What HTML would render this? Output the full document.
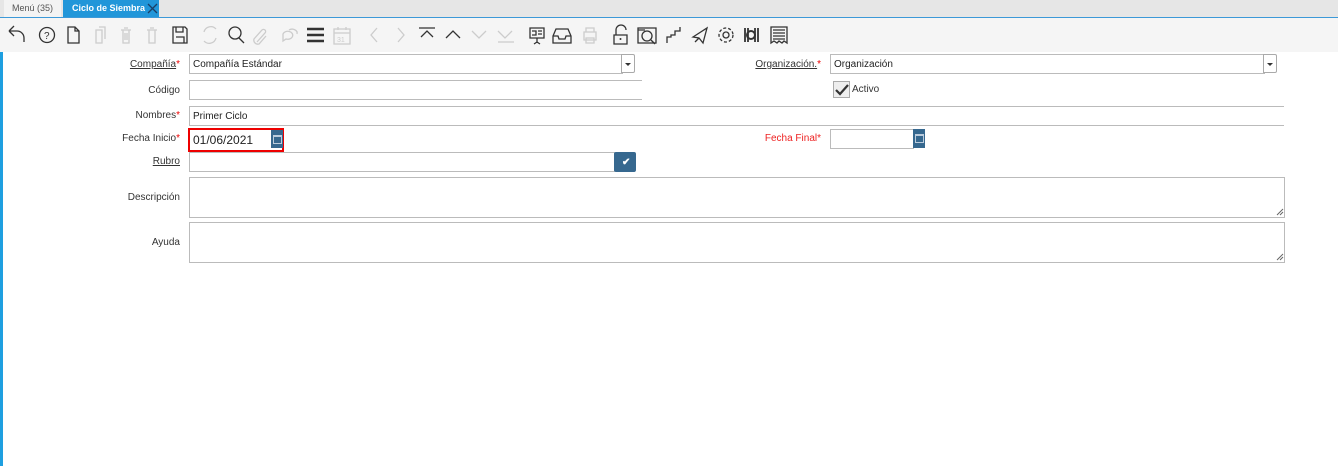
<!DOCTYPE html>
<html><head><meta charset="utf-8"><style>
body{margin:0;width:1338px;height:466px;background:#fff;font-family:"Liberation Sans",sans-serif;font-size:10px;color:#333;position:relative;overflow:hidden}
.a{position:absolute}
.tabs{left:0;top:0;width:1338px;height:17px;background:#e6e6e6;border-bottom:1px solid #3c99d8}
.tb{left:0;top:18px;width:1338px;height:34px;background:#f5f5f5}
.lb{text-align:right;width:120px;font-size:10px;color:#333}
.in{border:1px solid #bbb;background:#fff;box-sizing:border-box;font-size:10px;padding:4px 3px 0;color:#222}
.st{color:#e00}
u{text-decoration:underline}
.btn{background:#36688f;border-radius:2px}
.dd{border:1px solid #aaa;background:#fff;box-sizing:border-box;border-radius:0 2px 2px 0}
.dd:after{content:"";position:absolute;left:3px;top:8px;border:3px solid transparent;border-top:3px solid #333}
svg{position:absolute}
</style></head><body>
<div class="a tabs"></div>
<div class="a" style="left:4px;top:0;width:57px;height:17px;background:#f3f3f3;font-size:9px;color:#555;line-height:17px;text-align:center">Menú (35)</div>
<div class="a" style="left:63px;top:0;width:96px;height:17px;background:#2196d9;color:#fff;font-size:9px;font-weight:bold;line-height:17px;padding-left:9px;box-sizing:border-box">Ciclo de Siembra</div>
<svg style="left:147px;top:3px" width="11" height="11"><path d="M1 1L10 10M10 1L1 10" stroke="#1a3f66" stroke-width="1.3"/></svg>
<div class="a tb"></div>
<svg style="left:0;top:18px" width="800" height="34" fill="none" stroke-width="1.3">
<g stroke="#333"><path d="M9 13l5-5M9 13l5 5M9 13h8a7 7 0 0 1 7 7v4"/></g>
<circle cx="47" cy="17" r="7.5" stroke="#333"/><text x="44" y="21" font-size="10" fill="#333" stroke="none">?</text>
<path d="M68 9h7l4 4v12h-11z M75 9v4h4" stroke="#333"/>
<path d="M96 12h6v13h-6z M99 9h6v12" stroke="#ccc"/>
<path d="M121 12h10M123 12v13h6v-13M124 10h4M125 15v7M127 15v7" stroke="#ccc"/>
<path d="M147 12h10M149 12v13h6v-13M150 10h4" stroke="#ccc"/>
<path d="M173 9h12l2 2v14h-14z M176 9v5h7v-5 M176 19h8v6" stroke="#333"/>
<path d="M204 14a7 7 0 0 1 12-3M216 20a7 7 0 0 1-12 3" stroke="#ccc"/>
<circle cx="235" cy="15" r="6" stroke="#333"/><path d="M239 20l5 5" stroke="#333"/>
<path d="M257 24l8-9a2 2 0 0 0-3-3l-8 9a4 4 0 0 0 5 5l7-8" stroke="#ccc"/>
<path d="M283 16a5 4 0 1 1 3 5l-3 2z M289 12a5 4 0 0 1 8 4" stroke="#ccc"/>
<path d="M307 11h17M307 17h17M307 23h17" stroke="#333" stroke-width="2.5"/>
<path d="M334 11h16v15h-16zM334 15h16M338 9v3M346 9v3" stroke="#ccc"/><text x="337" y="24" font-size="7" fill="#ccc" stroke="none">31</text>
<path d="M377 10l-6 7 6 7M398 10l6 7-6 7" stroke="#ccc"/>
<path d="M419 10h16M421 19l6-6 6 6M446 20l7-7 7 7" stroke="#333"/>
<path d="M472 13l7 7 7-7M498 13l7 7 7-7M498 24h16" stroke="#ccc"/>
<path d="M530 10h14v10h-14zM537 20v5M534 26l3-2 3 2M532 13h4v4h-4M538 13h4M538 16h4" stroke="#333"/>
<path d="M556 11h12l3 7v7h-18v-7zM553 18h5l1 3h6l1-3h5" stroke="#333"/>
<path d="M584 14h12v8h-12zM586 14v-4h8v4M586 20h8v5h-8z" stroke="#ccc"/>
<path d="M616 17v-5a5 5 0 0 1 10 0M614 17h13v9h-13z" stroke="#333"/><circle cx="620.5" cy="21" r="1" fill="#333"/>
<path d="M638 10h18v15h-18zM638 12h7" stroke="#333"/><circle cx="647" cy="18" r="5" stroke="#333"/><path d="M651 22l4 4" stroke="#333"/>
<path d="M667 25v-6h4v-2h4v-4h5v-4" stroke="#333"/>
<path d="M693 19l14-9-4 15-4-5zM699 20l-4 4" stroke="#333"/>
<circle cx="726" cy="17" r="3" stroke="#333"/><circle cx="726" cy="17" r="7" stroke="#333" stroke-dasharray="3 2"/>
<path d="M745 10v14M748 10v14M755 10v14M758 10v14" stroke="#333" stroke-width="1.8"/><circle cx="751" cy="17" r="4" stroke="#333" stroke-width="2"/>
<path d="M771 9h16v16l-3-2-2 2-3-2-2 2-3-2-3 2zM773 12h12M773 15h12M773 18h12M773 21h12" stroke="#333"/>
</svg>
<div class="a" style="left:0;top:52px;width:3px;height:414px;background:#1e9fe0"></div>

<div class="a lb" style="left:60px;top:59px"><u>Compañía</u><span class="st">*</span></div>
<div class="a in" style="left:189px;top:54px;width:434px;height:20px">Compañía Estándar</div>
<div class="a dd" style="left:621px;top:54px;width:14px;height:19px"></div>

<div class="a lb" style="left:60px;top:85px">Código</div>
<div class="a in" style="left:189px;top:80px;width:453px;height:20px;border-right:none"></div>

<div class="a lb" style="left:60px;top:110px">Nombres<span class="st">*</span></div>
<div class="a in" style="left:189px;top:106px;width:1095px;height:20px;border-right:none">Primer Ciclo</div>

<div class="a lb" style="left:60px;top:133px">Fecha Inicio<span class="st">*</span></div>
<div class="a" style="left:188px;top:128px;width:86px;height:16px;border:2px solid #e00;font-size:12px;padding:2px 3px;line-height:16px;color:#222">01/06/2021</div>
<div class="a btn" style="left:271px;top:130px;width:12px;height:18px;border-radius:0"></div>
<div class="a" style="left:273px;top:135px;width:7px;height:6px;border:1px solid #bcd;border-top-width:2px"></div>

<div class="a lb" style="left:60px;top:156px"><u>Rubro</u></div>
<div class="a in" style="left:189px;top:152px;width:426px;height:20px"></div>
<div class="a btn" style="left:614px;top:152px;width:22px;height:20px"></div>
<div class="a" style="left:622px;top:157px;color:#fff;font-size:10px;font-weight:bold">✔</div>

<div class="a lb" style="left:60px;top:192px">Descripción</div>
<div class="a in" style="left:189px;top:177px;width:1096px;height:41px"></div>
<div class="a lb" style="left:60px;top:237px">Ayuda</div>
<div class="a in" style="left:189px;top:222px;width:1096px;height:41px"></div>
<svg style="left:1276px;top:208px" width="8" height="8"><path d="M1 7L7 1M4 7L7 4" stroke="#666"/></svg>
<svg style="left:1276px;top:253px" width="8" height="8"><path d="M1 7L7 1M4 7L7 4" stroke="#666"/></svg>

<div class="a lb" style="left:701px;top:59px"><u>Organización.</u><span class="st">*</span></div>
<div class="a in" style="left:830px;top:54px;width:435px;height:20px">Organización</div>
<div class="a dd" style="left:1263px;top:54px;width:14px;height:19px"></div>

<div class="a" style="left:833px;top:81px;width:15px;height:15px;border:1px solid #aaa;background:#eee"></div>
<svg style="left:834px;top:82px" width="15" height="15"><path d="M2 8l4 4 8-9" stroke="#333" stroke-width="2.2" fill="none"/></svg>
<div class="a" style="left:852px;top:84px;font-size:10px">Activo</div>

<div class="a lb" style="left:701px;top:133px;color:#e22">Fecha Final*</div>
<div class="a in" style="left:830px;top:129px;width:84px;height:20px"></div>
<div class="a btn" style="left:913px;top:129px;width:12px;height:19px;border-radius:0"></div>
<div class="a" style="left:915px;top:134px;width:7px;height:6px;border:1px solid #bcd;border-top-width:2px"></div>
</body></html>
